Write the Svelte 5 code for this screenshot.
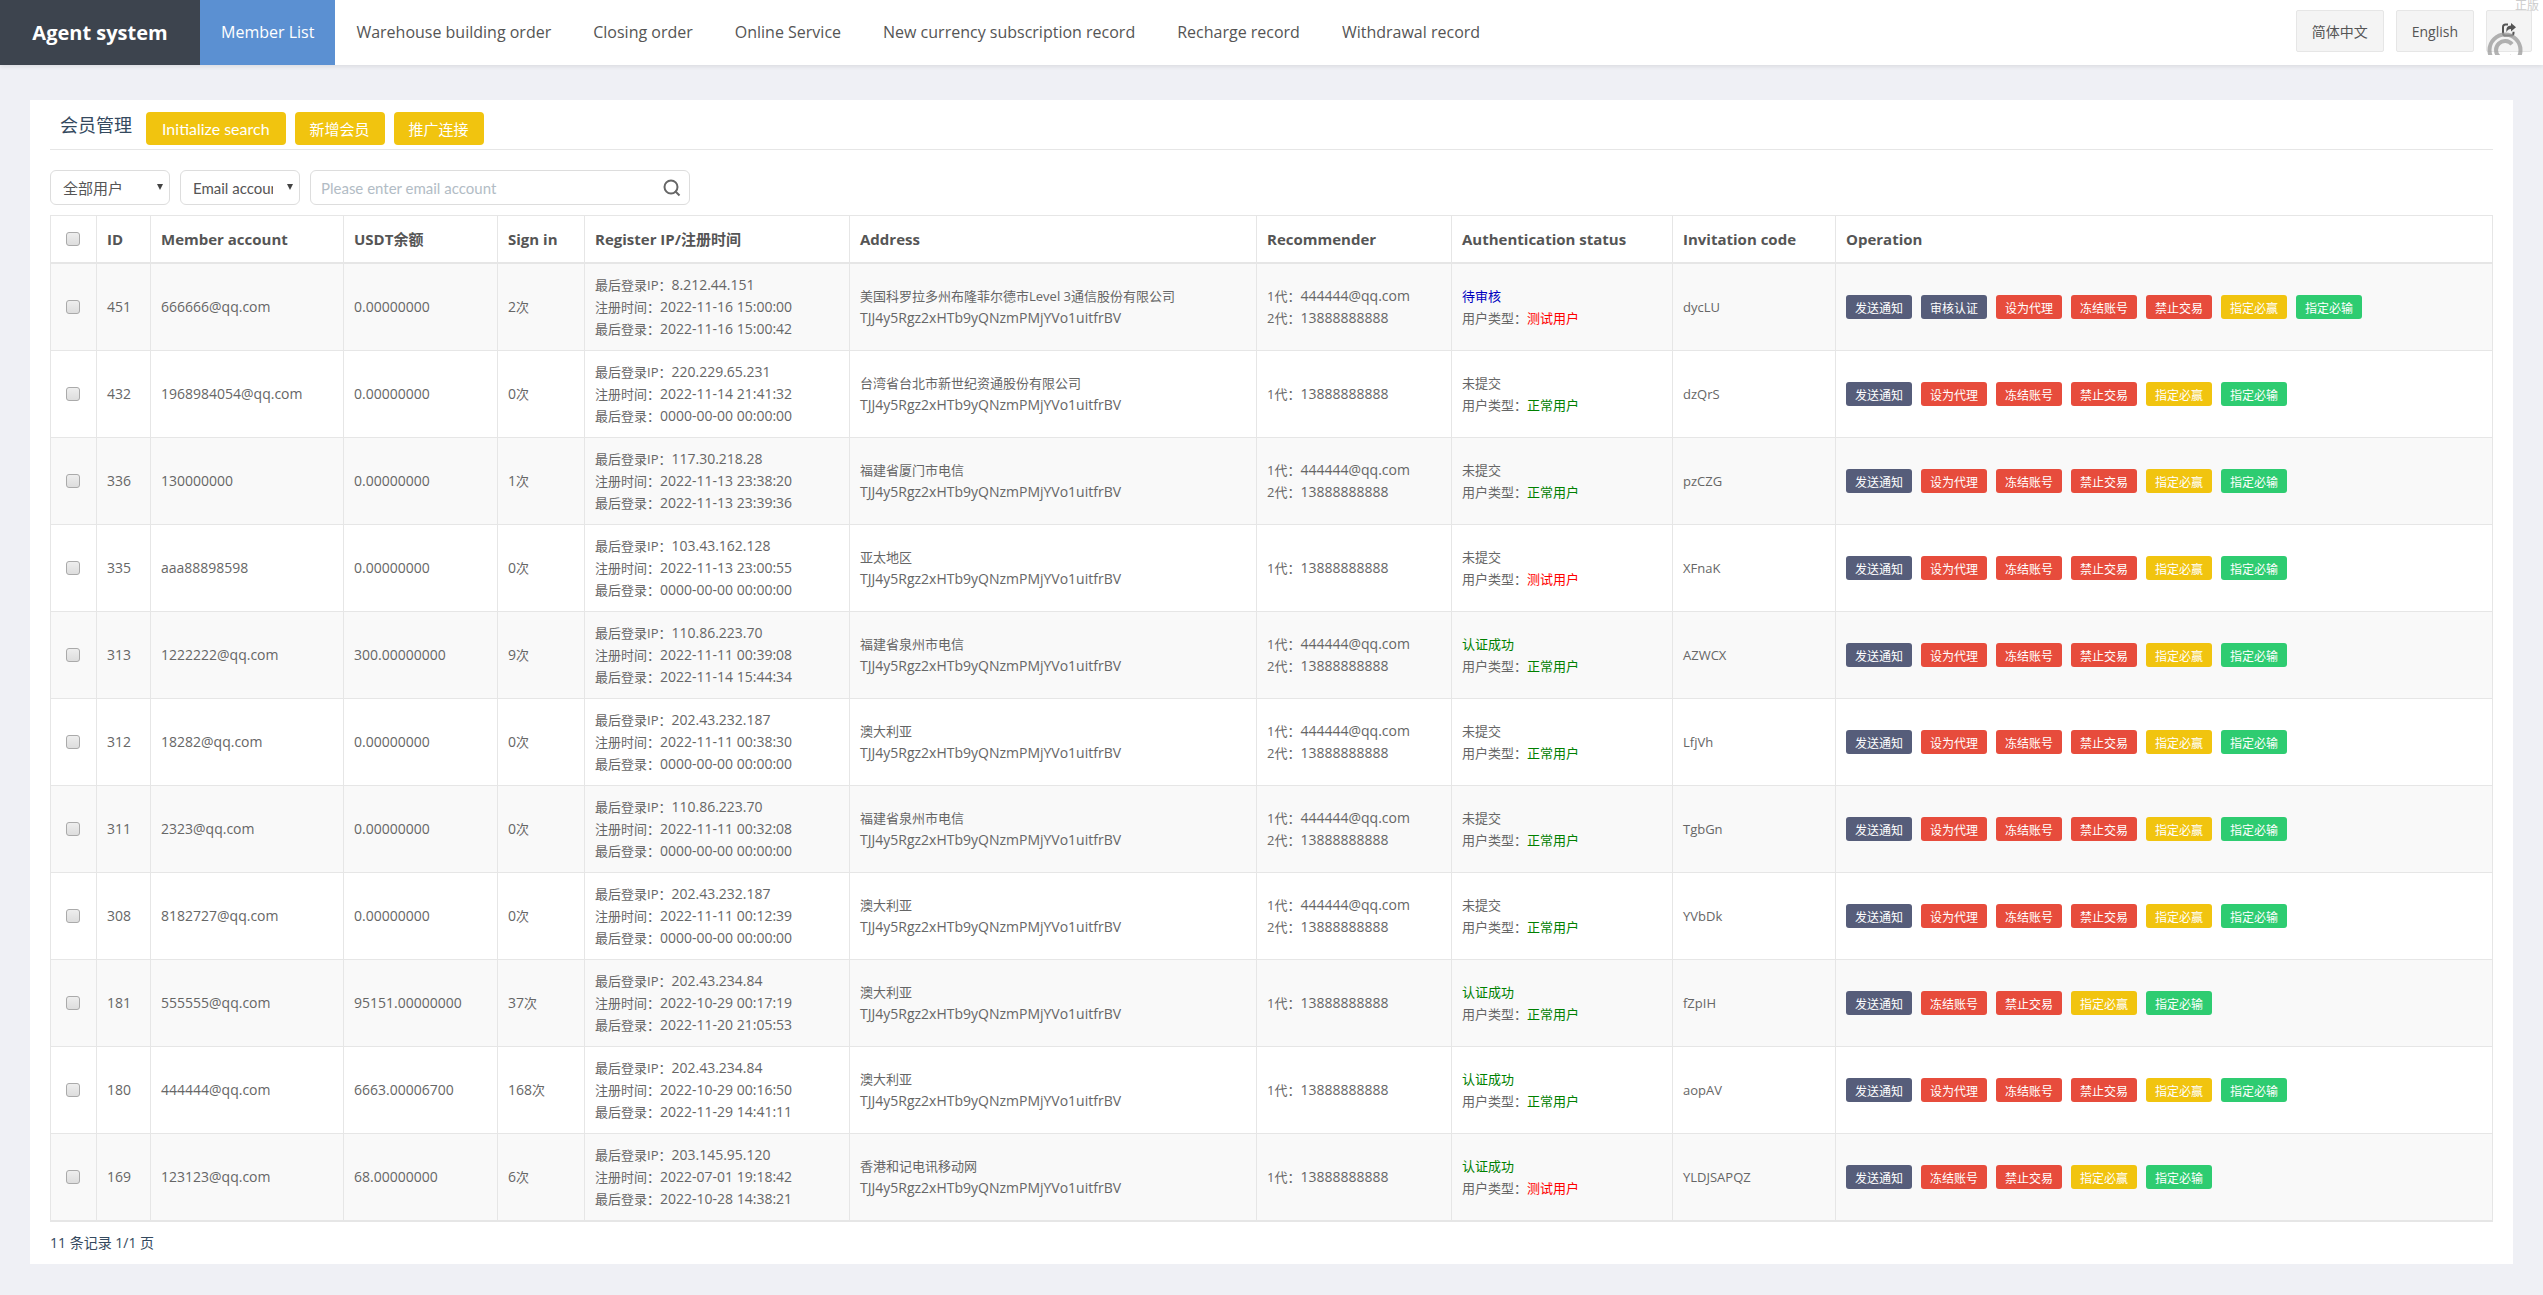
<script>
  const menu = [
    'Member List',
    'Warehouse building order',
    'Closing order',
    'Online Service',
    'New currency subscription record',
    'Recharge record',
    'Withdrawal record'
  ];
  let current = $state('Member List');

  const wallet = 'TJJ4y5Rgz2xHTb9yQNzmPMjYVo1uitfrBV';
  const two = ['444444@qq.com', '13888888888'];
  const one = ['13888888888'];

  const send = ['发送通知', 'navy'];
  const audit = ['审核认证', 'navy'];
  const agent = ['设为代理', 'red'];
  const freeze = ['冻结账号', 'red'];
  const ban = ['禁止交易', 'red'];
  const win = ['指定必赢', 'yellow'];
  const lose = ['指定必输', 'green'];
  const full = [send, agent, freeze, ban, win, lose];
  const short = [send, freeze, ban, win, lose];

  const rows = [
    { id: 451, account: '666666@qq.com', balance: '0.00000000', sign: 2, ip: '8.212.44.151', reg: '2022-11-16 15:00:00', last: '2022-11-16 15:00:42', place: '美国科罗拉多州布隆菲尔德市Level 3通信股份有限公司', rec: two, auth: '待审核', test: true, code: 'dycLU', ops: [send, audit, agent, freeze, ban, win, lose] },
    { id: 432, account: '1968984054@qq.com', balance: '0.00000000', sign: 0, ip: '220.229.65.231', reg: '2022-11-14 21:41:32', last: '0000-00-00 00:00:00', place: '台湾省台北市新世纪资通股份有限公司', rec: one, auth: '未提交', test: false, code: 'dzQrS', ops: full },
    { id: 336, account: '130000000', balance: '0.00000000', sign: 1, ip: '117.30.218.28', reg: '2022-11-13 23:38:20', last: '2022-11-13 23:39:36', place: '福建省厦门市电信', rec: two, auth: '未提交', test: false, code: 'pzCZG', ops: full },
    { id: 335, account: 'aaa88898598', balance: '0.00000000', sign: 0, ip: '103.43.162.128', reg: '2022-11-13 23:00:55', last: '0000-00-00 00:00:00', place: '亚太地区', rec: one, auth: '未提交', test: true, code: 'XFnaK', ops: full },
    { id: 313, account: '1222222@qq.com', balance: '300.00000000', sign: 9, ip: '110.86.223.70', reg: '2022-11-11 00:39:08', last: '2022-11-14 15:44:34', place: '福建省泉州市电信', rec: two, auth: '认证成功', test: false, code: 'AZWCX', ops: full },
    { id: 312, account: '18282@qq.com', balance: '0.00000000', sign: 0, ip: '202.43.232.187', reg: '2022-11-11 00:38:30', last: '0000-00-00 00:00:00', place: '澳大利亚', rec: two, auth: '未提交', test: false, code: 'LfjVh', ops: full },
    { id: 311, account: '2323@qq.com', balance: '0.00000000', sign: 0, ip: '110.86.223.70', reg: '2022-11-11 00:32:08', last: '0000-00-00 00:00:00', place: '福建省泉州市电信', rec: two, auth: '未提交', test: false, code: 'TgbGn', ops: full },
    { id: 308, account: '8182727@qq.com', balance: '0.00000000', sign: 0, ip: '202.43.232.187', reg: '2022-11-11 00:12:39', last: '0000-00-00 00:00:00', place: '澳大利亚', rec: two, auth: '未提交', test: false, code: 'YVbDk', ops: full },
    { id: 181, account: '555555@qq.com', balance: '95151.00000000', sign: 37, ip: '202.43.234.84', reg: '2022-10-29 00:17:19', last: '2022-11-20 21:05:53', place: '澳大利亚', rec: one, auth: '认证成功', test: false, code: 'fZpIH', ops: short },
    { id: 180, account: '444444@qq.com', balance: '6663.00006700', sign: 168, ip: '202.43.234.84', reg: '2022-10-29 00:16:50', last: '2022-11-29 14:41:11', place: '澳大利亚', rec: one, auth: '认证成功', test: false, code: 'aopAV', ops: full },
    { id: 169, account: '123123@qq.com', balance: '68.00000000', sign: 6, ip: '203.145.95.120', reg: '2022-07-01 19:18:42', last: '2022-10-28 14:38:21', place: '香港和记电讯移动网', rec: one, auth: '认证成功', test: true, code: 'YLDJSAPQZ', ops: short }
  ];
  const authClass = { 待审核: 'pending', 认证成功: 'ok' };

  let selected = $state([]);
  let allChecked = $derived(selected.length === rows.length);

  function toggleAll(e) {
    selected = e.currentTarget.checked ? rows.map((r) => r.id) : [];
  }
</script>

<header class="topbar">
  <a class="brand" href="#home">Agent system</a>
  <nav>
    {#each menu as item}
      <a href="#menu" class:active={item === current} onclick={() => (current = item)}>{item}</a>
    {/each}
  </nav>
  <div class="tools">
    <button type="button">简体中文</button>
    <button type="button">English</button>
    <button type="button" aria-label="Log out">
      <svg viewBox="0 0 14 14" width="14" height="14">
        <path d="M6 1.5H3.6Q1 1.5 1 4.1v5.800Q1 12.500 3.600 12.500h5.300q2.600 0 2.600-2.600V8.800" fill="none" stroke="#555" stroke-width="2" />
        <path d="M9 0l5 4.200-5 4.200V6C6.800 6 5.400 6.800 4.600 9.200 3.700 5 5.600 2.500 9 2.400z" fill="#555" />
      </svg>
    </button>
  </div>
  <div class="mark" aria-hidden="true">
    <span>正版</span>
    <svg viewBox="0 0 36 23" width="36" height="23">
      <circle cx="18" cy="18" r="15.500" />
      <path d="M25 12.300a9 9 0 1 0 0 11.400" />
    </svg>
  </div>
</header>

<main class="card">
  <div class="title">
    <h1>会员管理</h1>
    <button type="button" class="init">Initialize search</button>
    <button type="button">新增会员</button>
    <button type="button">推广连接</button>
  </div>

  <form class="search" onsubmit={(e) => e.preventDefault()}>
    <div class="select">
      <select aria-label="User type">
        <option>全部用户</option>
        <option>正常用户</option>
        <option>测试用户</option>
      </select>
    </div>
    <div class="select">
      <select aria-label="Search field">
        <option>Email account</option>
        <option>ID</option>
      </select>
    </div>
    <div class="keyword">
      <input type="text" placeholder="Please enter email account" aria-label="Email account" />
      <button type="submit" aria-label="Search">
        <svg viewBox="0 0 18 18" width="18" height="18" fill="none" stroke="#666" stroke-width="2">
          <circle cx="8" cy="8" r="6.500" />
          <path d="M12 12l4.500 4.500" />
        </svg>
      </button>
    </div>
  </form>

  <table>
    <colgroup>
      <col class="c-check" /><col class="c-id" /><col class="c-account" /><col class="c-usdt" />
      <col class="c-sign" /><col class="c-reg" /><col class="c-addr" /><col class="c-rec" />
      <col class="c-auth" /><col class="c-code" /><col />
    </colgroup>
    <thead>
      <tr>
        <th class="check"><input type="checkbox" aria-label="Select all" checked={allChecked} onchange={toggleAll} /></th>
        <th>ID</th>
        <th>Member account</th>
        <th>USDT余额</th>
        <th>Sign in</th>
        <th>Register IP/注册时间</th>
        <th>Address</th>
        <th>Recommender</th>
        <th>Authentication status</th>
        <th>Invitation code</th>
        <th>Operation</th>
      </tr>
    </thead>
    <tbody>
      {#each rows as row (row.id)}
        <tr>
          <td class="check"><input type="checkbox" aria-label="Select {row.id}" value={row.id} bind:group={selected} /></td>
          <td><span class="val">{row.id}</span></td>
          <td><span class="val">{row.account}</span></td>
          <td><span class="val">{row.balance}</span></td>
          <td><span class="val">{row.sign}</span>次</td>
          <td>
            <div>最后登录IP：<span class="val">{row.ip}</span></div>
            <div>注册时间：<span class="val">{row.reg}</span></div>
            <div>最后登录：<span class="val">{row.last}</span></div>
          </td>
          <td>
            <div>{row.place}</div>
            <div><span class="val">{wallet}</span></div>
          </td>
          <td>
            {#each row.rec as name, i}
              <div>{i + 1}代：<span class="val">{name}</span></div>
            {/each}
          </td>
          <td>
            <div class={authClass[row.auth]}>{row.auth}</div>
            <div>用户类型：<span class={row.test ? 'test' : 'ok'}>{row.test ? '测试用户' : '正常用户'}</span></div>
          </td>
          <td>{row.code}</td>
          <td>
            <div class="ops">
              {#each row.ops as [label, color]}
                <button type="button" class={color}>{label}</button>
              {/each}
            </div>
          </td>
        </tr>
      {/each}
    </tbody>
  </table>
  <p class="pager">11 条记录 1/1 页</p>
</main>

<style>
  :global(body) {
    background: #eff0f5;
    color: #666;
    font: 13px/22px 'Open Sans', 'Noto Sans CJK SC', sans-serif;
  }

  button,
  input,
  select {
    font-family: Lato, 'Noto Sans CJK SC', sans-serif;
  }

  button {
    cursor: pointer;
  }

  .topbar {
    position: relative;
    display: flex;
    height: 65px;
    background: #fff;
    box-shadow: 0 2px 4px rgba(0, 0, 0, 0.08);
  }

  .topbar a {
    line-height: 65px;
    text-decoration: none;
    white-space: nowrap;
  }

  .brand {
    width: 200px;
    background: #3d444e;
    color: #fff;
    font-size: 20px;
    font-weight: bold;
    text-align: center;
  }

  nav {
    display: flex;
    flex: 1;
  }

  nav a {
    padding: 0 21px;
    color: #555;
    font-size: 16px;
  }

  nav a.active {
    background: #5b90d2;
    color: #fff;
  }

  .tools {
    display: flex;
    align-items: flex-start;
    gap: 12px;
    padding: 10px 11px 0 0;
  }

  .tools button {
    height: 42px;
    padding: 0 15px;
    border: 1px solid #e6e6e6;
    border-radius: 2px;
    background: #f4f4f4;
    color: #555;
    font: 14px 'Open Sans', 'Noto Sans CJK SC', sans-serif;
  }

  .mark {
    position: absolute;
    top: 0;
    right: 4px;
    color: #ccc;
    font-size: 12px;
    line-height: 12px;
    pointer-events: none;
  }

  .mark svg {
    position: absolute;
    top: 32px;
    right: 16px;
    fill: none;
    stroke: #999;
    stroke-opacity: 0.75;
    stroke-width: 4;
  }

  .card {
    margin: 35px 30px 30px;
    padding: 12px 20px 10px;
    background: #fff;
  }

  .title {
    display: flex;
    gap: 9px;
    padding: 0 10px 4px;
    border-bottom: 1px solid #e6e6e6;
  }

  h1 {
    margin: 0 5px 0 0;
    color: #34495e;
    font-size: 18px;
    font-weight: normal;
    line-height: 26px;
  }

  .title button {
    height: 33px;
    padding: 0 15px;
    border: 0;
    border-radius: 4px;
    background: #f1c40f;
    color: #fff;
    font-size: 15px;
  }

  .title .init {
    padding: 0 16px;
    font-size: 16px;
  }

  .search {
    display: flex;
    gap: 10px;
    margin: 20px 0 10px;
  }

  .select,
  .keyword {
    position: relative;
    box-sizing: border-box;
    width: 120px;
    height: 35px;
    border: 1px solid #ddd;
    border-radius: 6px;
  }

  .select::after {
    content: '';
    position: absolute;
    top: 13px;
    right: 6px;
    border: 3px solid transparent;
    border-top: 6px solid #444;
    border-bottom: 0;
    pointer-events: none;
  }

  select,
  .keyword input {
    box-sizing: border-box;
    width: 100%;
    height: 33px;
    padding: 0 26px 0 12px;
    border: 0;
    outline: 0;
    background: transparent;
    color: #555;
    font-size: 15px;
    appearance: none;
  }

  .keyword {
    display: flex;
    align-items: center;
    width: 380px;
  }

  .keyword input {
    padding: 0 10px;
  }

  .keyword input::placeholder {
    color: #b2bcc5;
  }

  .keyword button {
    display: flex;
    padding: 0 8px;
    border: 0;
    background: none;
  }

  table {
    width: 100%;
    border-collapse: collapse;
    border: 1px solid #e6e6e6;
    border-bottom: 2px solid #e6e6e6;
    table-layout: fixed;
  }

  .c-check { width: 46px; }
  .c-id { width: 54px; }
  .c-account { width: 193px; }
  .c-usdt { width: 154px; }
  .c-sign { width: 87px; }
  .c-reg { width: 265px; }
  .c-addr { width: 407px; }
  .c-rec { width: 195px; }
  .c-auth { width: 221px; }
  .c-code { width: 163px; }

  th,
  td {
    padding: 10px;
    border: 1px solid #e6e6e6;
    text-align: left;
    vertical-align: middle;
  }

  th {
    height: 26px;
    border-bottom: 2px solid #e6e6e6;
    color: #555;
    font-size: 15px;
    white-space: nowrap;
  }

  td {
    height: 66px;
  }

  tbody tr:nth-child(odd) {
    background: #f9f9f9;
  }

  .val {
    font-size: 14px;
    line-height: 14px;
  }

  .check {
    padding: 0 15px;
  }

  .check input {
    display: block;
    appearance: none;
    width: 14px;
    height: 14px;
    margin: 0;
    border: 1px solid #aaa;
    border-radius: 3px;
    background: linear-gradient(#eee, #ddd);
  }

  .check input:checked {
    background: #5b90d2;
  }

  .pending {
    color: #0000c0;
  }

  .ok {
    color: #008000;
  }

  .test {
    color: #f00;
  }

  .ops {
    display: flex;
    gap: 9px;
  }

  .ops button {
    width: 66px;
    height: 24px;
    padding: 0;
    border: 0;
    border-radius: 3px;
    color: #fff;
    font-size: 12px;
    white-space: nowrap;
  }

  .ops .navy { background: #565d7a; }
  .ops .red { background: #e74c3c; }
  .ops .yellow { background: #f1c40f; }
  .ops .green { background: #2ecc71; }

  .pager {
    margin: 10px 0 0;
    color: #34495e;
    font-size: 14px;
  }
</style>
